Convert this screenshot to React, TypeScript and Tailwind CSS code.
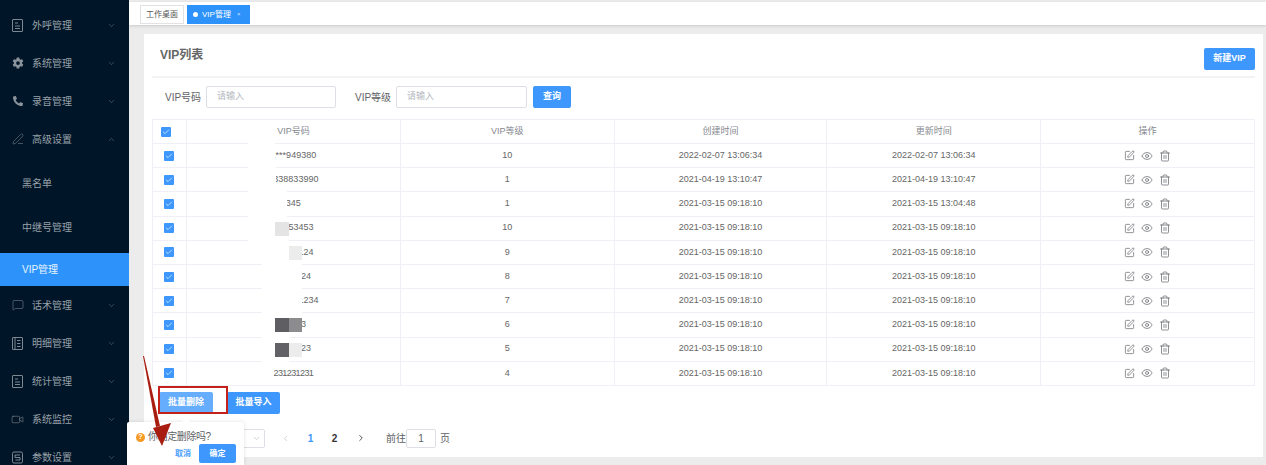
import {
  Check,
  ChevronDown,
  ChevronLeft,
  ChevronRight,
  ChevronUp,
  Eye,
  MessageSquare,
  PenLine,
  SquarePen,
  Trash2,
  Video,
} from "lucide-react";
import { FaPhoneAlt } from "react-icons/fa";
import { IoSettingsSharp } from "react-icons/io5";

function DocIcon() {
  return (
    <svg width="11" height="13" viewBox="0 0 11 13" fill="none" stroke="currentColor" strokeWidth="0.9">
      <rect x="0.5" y="0.5" width="10" height="12" rx="0.5" />
      <path d="M3 4h3M3 7h5M3 9.5h5" />
    </svg>
  );
}

function BookIcon() {
  return (
    <svg width="11" height="13" viewBox="0 0 11 13" fill="none" stroke="currentColor" strokeWidth="0.9">
      <rect x="0.5" y="0.5" width="10" height="12" rx="0.5" />
      <path d="M3 0.5v12M5 3.5h3.5M5 6.5h3.5M5 9.5h3.5" />
    </svg>
  );
}

function ParamIcon() {
  return (
    <svg width="11" height="13" viewBox="0 0 11 13" fill="none" stroke="currentColor" strokeWidth="0.9">
      <rect x="0.5" y="1" width="10" height="11" rx="1.5" />
      <path d="M3 4h5M3 4v2.5h5V9H3.5" />
    </svg>
  );
}

function ChatIcon() {
  return <MessageSquare size={12} strokeWidth={1} />;
}

function CameraIcon() {
  return <Video size={13} strokeWidth={1} />;
}

function PenIcon() {
  return <PenLine size={12} strokeWidth={1} />;
}

function GearIcon() {
  return <IoSettingsSharp size={12} />;
}

function PhoneIcon() {
  return <FaPhoneAlt size={10} />;
}

const topMenu = [
  { name: "外呼管理", icon: DocIcon },
  { name: "系统管理", icon: GearIcon },
  { name: "录音管理", icon: PhoneIcon },
];

const bottomMenu = [
  { name: "话术管理", icon: ChatIcon },
  { name: "明细管理", icon: BookIcon },
  { name: "统计管理", icon: DocIcon },
  { name: "系统监控", icon: CameraIcon },
  { name: "参数设置", icon: ParamIcon },
];

// patches hide part of the number, positions are relative to the number cell
const rows = [
  { no: "1***949380", level: 10, created: "2022-02-07 13:06:34", updated: "2022-02-07 13:06:34", white: "left-[61px] w-[27px]", a: "", b: "", text: "" },
  { no: "5338833990", level: 1, created: "2021-04-19 13:10:47", updated: "2021-04-19 13:10:47", white: "left-[61px] w-[28px]", a: "", b: "", text: "" },
  { no: "345", level: 1, created: "2021-03-15 09:18:10", updated: "2021-03-15 13:04:48", white: "left-[61px] w-[39px]", a: "", b: "", text: "" },
  { no: "13353453", level: 10, created: "2021-03-15 09:18:10", updated: "2021-03-15 09:18:10", white: "left-[61px] w-[27px]", a: "bg-[#e3e4e3]", b: "", text: "" },
  { no: "12312124", level: 9, created: "2021-03-15 09:18:10", updated: "2021-03-15 09:18:10", white: "left-[75px] w-[27px]", a: "", b: "bg-[#ececec]", text: "" },
  { no: "1231224", level: 8, created: "2021-03-15 09:18:10", updated: "2021-03-15 09:18:10", white: "left-[75px] w-[40px]", a: "", b: "", text: "" },
  { no: "1231231234", level: 7, created: "2021-03-15 09:18:10", updated: "2021-03-15 09:18:10", white: "left-[75px] w-[40px]", a: "", b: "", text: "" },
  { no: "12323", level: 6, created: "2021-03-15 09:18:10", updated: "2021-03-15 09:18:10", white: "left-[75px] w-[27px]", a: "bg-[#5f5f63]", b: "bg-[#8c8c8f]", text: "" },
  { no: "1231223", level: 5, created: "2021-03-15 09:18:10", updated: "2021-03-15 09:18:10", white: "left-[75px] w-[27px]", a: "bg-[#626266]", b: "bg-[#ececec]", text: "" },
  { no: "231231231", level: 4, created: "2021-03-15 09:18:10", updated: "2021-03-15 09:18:10", white: "", a: "", b: "", text: "tracking-[-0.6px]" },
];

function Box() {
  return (
    <span className="flex h-[10px] w-[10px] items-center justify-center rounded-[1px] bg-[#3d97fd]">
      <Check size={8} strokeWidth={2} className="text-white" />
    </span>
  );
}

function MenuItem({ name, icon: Icon, open }: { name: string; icon: () => React.ReactNode; open?: boolean }) {
  return (
    <div className="flex h-[38px] items-center pl-[11px] pr-[13px] text-[10px] text-[#98a1a9]">
      <span className="mr-[8px] flex w-[13px] justify-center text-[#8b949c]">
        <Icon />
      </span>
      <span className="flex-1">{name}</span>
      {open ? (
        <ChevronUp size={9} strokeWidth={1} />
      ) : (
        <ChevronDown size={9} strokeWidth={1} />
      )}
    </div>
  );
}

export default function App() {
  return (
    <div className="relative flex h-[465px] w-[1266px] overflow-hidden bg-[#ececec] font-['Liberation_Sans','Noto_Sans_CJK_SC',sans-serif]">
      <aside className="w-[129px] shrink-0 bg-[#011528] pt-[6px]">
        {topMenu.map((m) => (
          <MenuItem key={m.name} name={m.name} icon={m.icon} />
        ))}
        <MenuItem name="高级设置" icon={PenIcon} open />
        <div className="mt-[3px] flex h-[44px] items-center pl-[22px] text-[10px] text-[#98a1a9]">黑名单</div>
        <div className="flex h-[44px] items-center pl-[22px] text-[10px] text-[#98a1a9]">中继号管理</div>
        <div className="mt-[4px] flex h-[33px] items-center bg-[#2d93fb] pl-[22px] text-[10px] text-[#e8f3ff]">VIP管理</div>
        {bottomMenu.map((m) => (
          <MenuItem key={m.name} name={m.name} icon={m.icon} />
        ))}
      </aside>

      <main className="flex min-w-0 flex-1 flex-col">
        <div className="mt-[2px] flex h-[23px] items-start gap-[3px] bg-white pl-[11px] pt-[3px] shadow-[0_1px_3px_rgba(0,0,0,0.15)]">
          <div className="flex h-[19px] w-[44px] items-center justify-center border border-[#e2e2e2] text-[8px] text-[#555]">工作桌面</div>
          <div className="flex h-[19px] w-[63px] items-center bg-[#2d93fb] pl-[6px] text-[8px] text-white">
            <span className="mr-[4px] h-[5px] w-[5px] rounded-full bg-white" />
            VIP管理
            <span className="ml-[6px] text-[6px] text-[#cfe5ff]">×</span>
          </div>
        </div>

        <div className="pl-[15px] pr-[3px] pt-[9px]">
          <section className="h-[423px] bg-white px-[8px]">
            <div className="flex h-[44px] items-center justify-between border-b-2 border-[#f2f3f3] pl-[8px]">
              <h1 className="text-[12px] font-bold text-[#666]">VIP列表</h1>
              <button className="mb-[6px] flex h-[22px] w-[51px] items-center justify-center self-end rounded-[2px] bg-[#3d97fd] text-[9px] font-bold text-white">新建VIP</button>
            </div>

            <div className="h-[41px] pl-[13px] pt-[8px] text-[10px] text-[#5f6266]">
              <div className="flex h-[22px] items-center">
                <span className="w-[41px]">VIP号码</span>
                <div className="flex h-[22px] w-[130px] items-center rounded-[2px] border border-[#dcdfe6] pl-[10px] text-[9px] text-[#b4b8bf]">请输入</div>
                <span className="ml-[19px] w-[41px]">VIP等级</span>
                <div className="flex h-[22px] w-[131px] items-center rounded-[2px] border border-[#dcdfe6] pl-[10px] text-[9px] text-[#b4b8bf]">请输入</div>
                <button className="ml-[6px] flex h-[22px] w-[38px] items-center justify-center rounded-[2px] bg-[#3d97fd] text-[9px] font-bold text-white">查询</button>
              </div>
            </div>

            <div className="border-l border-t border-[#eef0f5] text-[9px] text-[#666]">
              <div className="flex h-[24px] border-b border-[#eef0f5] text-[#85888e]">
                <div className="flex w-[34px] items-center border-r border-[#eef0f5] pl-[8px]">
                  <Box />
                </div>
                <div className="flex w-[214px] items-center justify-center border-r border-[#eef0f5]">VIP号码</div>
                <div className="flex w-[214px] items-center justify-center border-r border-[#eef0f5]">VIP等级</div>
                <div className="flex w-[213px] items-center justify-center border-r border-[#eef0f5]">创建时间</div>
                <div className="flex w-[214px] items-center justify-center border-r border-[#eef0f5]">更新时间</div>
                <div className="flex w-[214px] items-center justify-center border-r border-[#eef0f5]">操作</div>
              </div>
              {rows.map((r) => (
                <div key={r.level + r.no} className="flex h-[24.2px] border-b border-[#eef0f5]">
                  <div className="flex w-[34px] items-center border-r border-[#eef0f5] pl-[11px]">
                    <Box />
                  </div>
                  <div className="relative flex w-[214px] items-center justify-center border-r border-[#eef0f5]">
                    <span className={r.text}>{r.no}</span>
                    {r.white && <span className={`absolute -bottom-px -top-px bg-white ${r.white}`} />}
                    {r.a && <span className={`absolute left-[88px] top-[5px] h-[14px] w-[14px] ${r.a}`} />}
                    {r.b && <span className={`absolute left-[102px] top-[5px] h-[14px] w-[13px] ${r.b}`} />}
                  </div>
                  <div className="flex w-[214px] items-center justify-center border-r border-[#eef0f5]">{r.level}</div>
                  <div className="flex w-[213px] items-center justify-center border-r border-[#eef0f5]">{r.created}</div>
                  <div className="flex w-[214px] items-center justify-center border-r border-[#eef0f5]">{r.updated}</div>
                  <div className="flex w-[214px] items-center justify-center gap-[6px] border-r border-[#eef0f5] text-[#606266]">
                    <SquarePen size={11} strokeWidth={1.5} />
                    <Eye size={12} strokeWidth={1.4} />
                    <Trash2 size={12} strokeWidth={1.4} />
                  </div>
                </div>
              ))}
            </div>

            <div className="mt-[6px] flex gap-[14px] pl-[7px]">
              <button className="flex h-[22px] w-[54px] items-center justify-center rounded-[2px] bg-[#66adfd] text-[9px] font-bold text-white">批量删除</button>
              <button className="flex h-[22px] w-[53px] items-center justify-center rounded-[2px] bg-[#3d97fd] text-[9px] font-bold text-white">批量导入</button>
            </div>

            <div className="mt-[15px] flex h-[19px] items-center pl-[8px] text-[10px] text-[#606266]">
              <div className="flex h-[19px] w-[105px] items-center justify-end rounded-[2px] border border-[#dcdfe6] pr-[3px] text-[#c0c4cc]">
                <ChevronDown size={9} />
              </div>
              <ChevronLeft size={9} className="ml-[16px] text-[#c0c4cc]" />
              <span className="ml-[16px] w-[9px] text-center font-bold text-[#3d97fd]">1</span>
              <span className="ml-[15px] w-[9px] text-center font-bold text-[#333]">2</span>
              <ChevronRight size={10} className="ml-[17px] text-[#333]" />
              <span className="ml-[20px] w-[20px]">前往</span>
              <div className="flex h-[19px] w-[30px] items-center justify-center rounded-[2px] border border-[#dcdfe6]">1</div>
              <span className="ml-[4px]">页</span>
            </div>
          </section>
        </div>
      </main>

      {/* red mark drawn on the screenshot */}
      <div className="absolute left-[158px] top-[386px] h-[28px] w-[70px] border-2 border-[#c4211b]" />

      <div className="absolute left-[127px] top-[422px] h-[43px] w-[117px] rounded-t-[2px] bg-white shadow-[0_0_4px_rgba(0,0,0,0.12)]">
        <span className="absolute -top-[3px] left-[56px] h-[6px] w-[6px] rotate-45 bg-white" />
        <div className="flex items-center pl-[9px] pt-[8px] text-[10px] leading-[14px] text-[#606266]">
          <span className="mr-[3px] flex h-[9px] w-[9px] items-center justify-center rounded-full bg-[#f59a23] text-[7px] font-bold text-white">?</span>
          <span className="tracking-[-0.4px]">你确定删除吗?</span>
        </div>
        <div className="flex items-center justify-end gap-[8px] pr-[8px] text-[8px]">
          <span className="font-bold text-[#4aa0fd]">取消</span>
          <button className="flex h-[19px] w-[37px] items-center justify-center rounded-[2px] bg-[#3d97fd] text-[8px] font-bold text-white">确定</button>
        </div>
      </div>

      <svg className="absolute left-0 top-0" width="1266" height="465" viewBox="0 0 1266 465" fill="#a81d10">
        <polygon points="143,356 144,356 160,426 156,427" />
        <polygon points="153,428 171,423 162,446" />
      </svg>
    </div>
  );
}
